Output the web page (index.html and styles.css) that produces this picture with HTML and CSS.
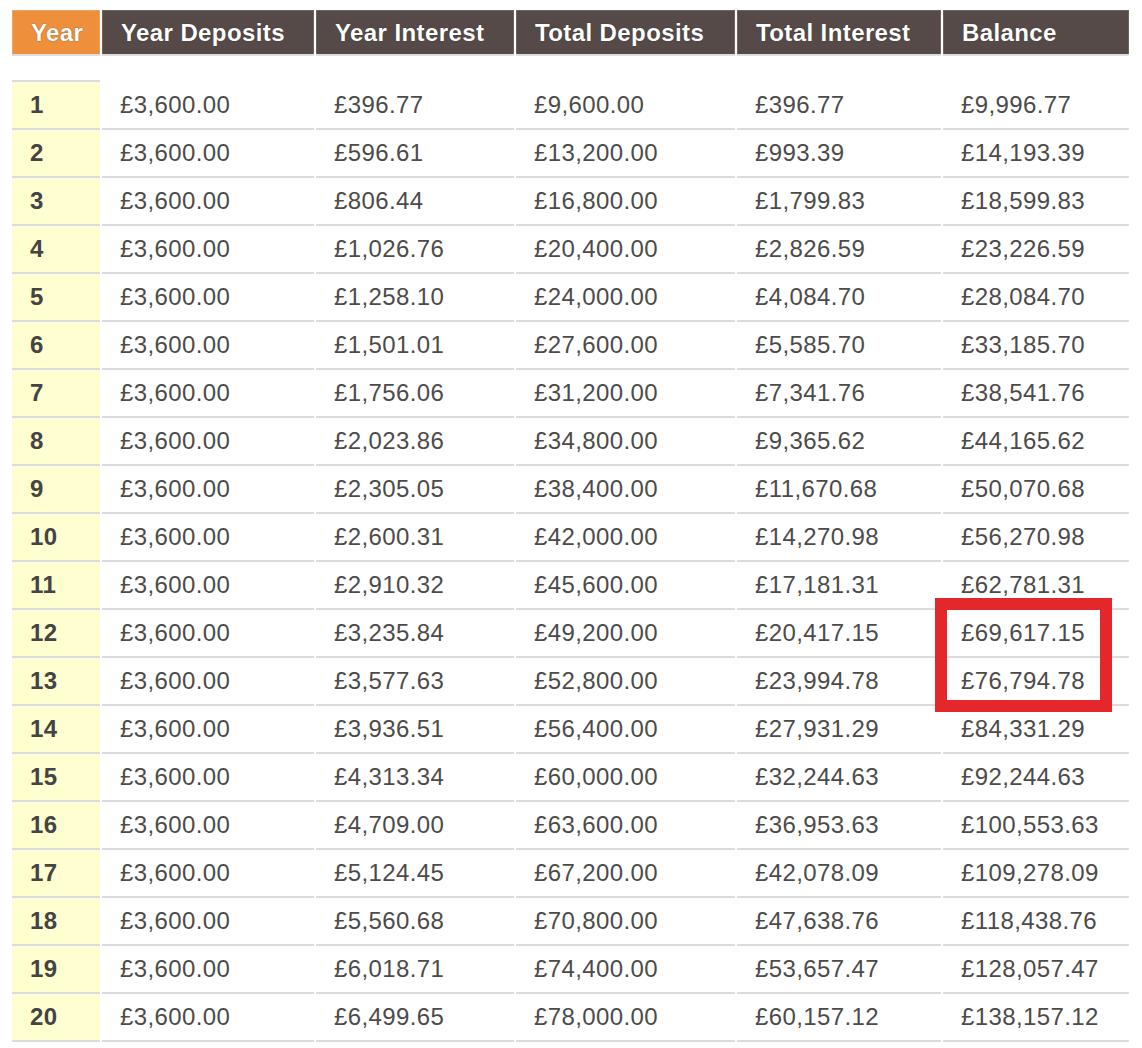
FILE: index.html
```
<!DOCTYPE html>
<html>
<head>
<meta charset="utf-8">
<link rel="stylesheet" href="styles.css">
</head>
<body>
<div class="wrap">
<table class="savings">
<colgroup>
<col class="c-year"><col class="c-yd"><col class="c-yi"><col class="c-td"><col class="c-ti"><col class="c-bal">
</colgroup>
<thead>
<tr>
<th class="year-h">Year</th>
<th>Year Deposits</th>
<th>Year Interest</th>
<th>Total Deposits</th>
<th>Total Interest</th>
<th>Balance</th>
</tr>
</thead>
<tbody>
<tr class="spacer"><td class="year"></td><td></td><td></td><td></td><td></td><td></td></tr>
<tr><td class="year">1</td><td>£3,600.00</td><td>£396.77</td><td>£9,600.00</td><td>£396.77</td><td>£9,996.77</td></tr>
<tr><td class="year">2</td><td>£3,600.00</td><td>£596.61</td><td>£13,200.00</td><td>£993.39</td><td>£14,193.39</td></tr>
<tr><td class="year">3</td><td>£3,600.00</td><td>£806.44</td><td>£16,800.00</td><td>£1,799.83</td><td>£18,599.83</td></tr>
<tr><td class="year">4</td><td>£3,600.00</td><td>£1,026.76</td><td>£20,400.00</td><td>£2,826.59</td><td>£23,226.59</td></tr>
<tr><td class="year">5</td><td>£3,600.00</td><td>£1,258.10</td><td>£24,000.00</td><td>£4,084.70</td><td>£28,084.70</td></tr>
<tr><td class="year">6</td><td>£3,600.00</td><td>£1,501.01</td><td>£27,600.00</td><td>£5,585.70</td><td>£33,185.70</td></tr>
<tr><td class="year">7</td><td>£3,600.00</td><td>£1,756.06</td><td>£31,200.00</td><td>£7,341.76</td><td>£38,541.76</td></tr>
<tr><td class="year">8</td><td>£3,600.00</td><td>£2,023.86</td><td>£34,800.00</td><td>£9,365.62</td><td>£44,165.62</td></tr>
<tr><td class="year">9</td><td>£3,600.00</td><td>£2,305.05</td><td>£38,400.00</td><td>£11,670.68</td><td>£50,070.68</td></tr>
<tr><td class="year">10</td><td>£3,600.00</td><td>£2,600.31</td><td>£42,000.00</td><td>£14,270.98</td><td>£56,270.98</td></tr>
<tr><td class="year">11</td><td>£3,600.00</td><td>£2,910.32</td><td>£45,600.00</td><td>£17,181.31</td><td>£62,781.31</td></tr>
<tr><td class="year">12</td><td>£3,600.00</td><td>£3,235.84</td><td>£49,200.00</td><td>£20,417.15</td><td>£69,617.15</td></tr>
<tr><td class="year">13</td><td>£3,600.00</td><td>£3,577.63</td><td>£52,800.00</td><td>£23,994.78</td><td>£76,794.78</td></tr>
<tr><td class="year">14</td><td>£3,600.00</td><td>£3,936.51</td><td>£56,400.00</td><td>£27,931.29</td><td>£84,331.29</td></tr>
<tr><td class="year">15</td><td>£3,600.00</td><td>£4,313.34</td><td>£60,000.00</td><td>£32,244.63</td><td>£92,244.63</td></tr>
<tr><td class="year">16</td><td>£3,600.00</td><td>£4,709.00</td><td>£63,600.00</td><td>£36,953.63</td><td>£100,553.63</td></tr>
<tr><td class="year">17</td><td>£3,600.00</td><td>£5,124.45</td><td>£67,200.00</td><td>£42,078.09</td><td>£109,278.09</td></tr>
<tr><td class="year">18</td><td>£3,600.00</td><td>£5,560.68</td><td>£70,800.00</td><td>£47,638.76</td><td>£118,438.76</td></tr>
<tr><td class="year">19</td><td>£3,600.00</td><td>£6,018.71</td><td>£74,400.00</td><td>£53,657.47</td><td>£128,057.47</td></tr>
<tr><td class="year">20</td><td>£3,600.00</td><td>£6,499.65</td><td>£78,000.00</td><td>£60,157.12</td><td>£138,157.12</td></tr>
</tbody>
</table>
<div class="highlight"></div>
</div>
</body>
</html>
```
FILE: styles.css
```
html, body {
  margin: 0;
  padding: 0;
  background: #ffffff;
}

.wrap {
  position: relative;
  padding-top: 10px;
  padding-left: 10px;
}

.savings {
  border-collapse: separate;
  border-spacing: 2px 0;
  table-layout: fixed;
  width: 1121px;
  font-family: "Liberation Sans", Arial, sans-serif;
  font-size: 24px;
  letter-spacing: 0.4px;
  color: #4d4b4a;
}

.c-year { width: 88px; }
.c-yd { width: 212px; }
.c-yi { width: 198px; }
.c-td { width: 219px; }
.c-ti { width: 204px; }
.c-bal { width: 186px; }

.savings th {
  background: #554a47;
  color: #ffffff;
  font-weight: bold;
  text-align: left;
  height: 44px;
  padding: 0 0 0 18px;
  box-sizing: border-box;
  border: 1px solid #6d6360;
  border-bottom: none;
  box-shadow: 0 2px 0 #dedede;
  text-shadow: 0 0 1px rgba(0, 0, 0, 0.6);
  vertical-align: middle;
}

.savings th.year-h {
  background: #ee8f3b;
  border-color: #f0a35c;
}

.savings td {
  height: 48px;
  box-sizing: border-box;
  padding: 0 0 0 18px;
  border-bottom: 2px solid #dcdcdc;
  vertical-align: middle;
  white-space: nowrap;
}

.savings td.year {
  background: #fefed0;
  font-weight: bold;
  color: #454343;
}

.savings tr.spacer td {
  height: 28px;
  border-bottom-color: transparent;
}

.savings tr.spacer td.year {
  background: transparent;
  border-bottom-color: #dcdcdc;
}

.highlight {
  position: absolute;
  left: 935px;
  top: 598px;
  width: 177px;
  height: 114px;
  box-sizing: border-box;
  border: 12px solid #e4272b;
}
```
